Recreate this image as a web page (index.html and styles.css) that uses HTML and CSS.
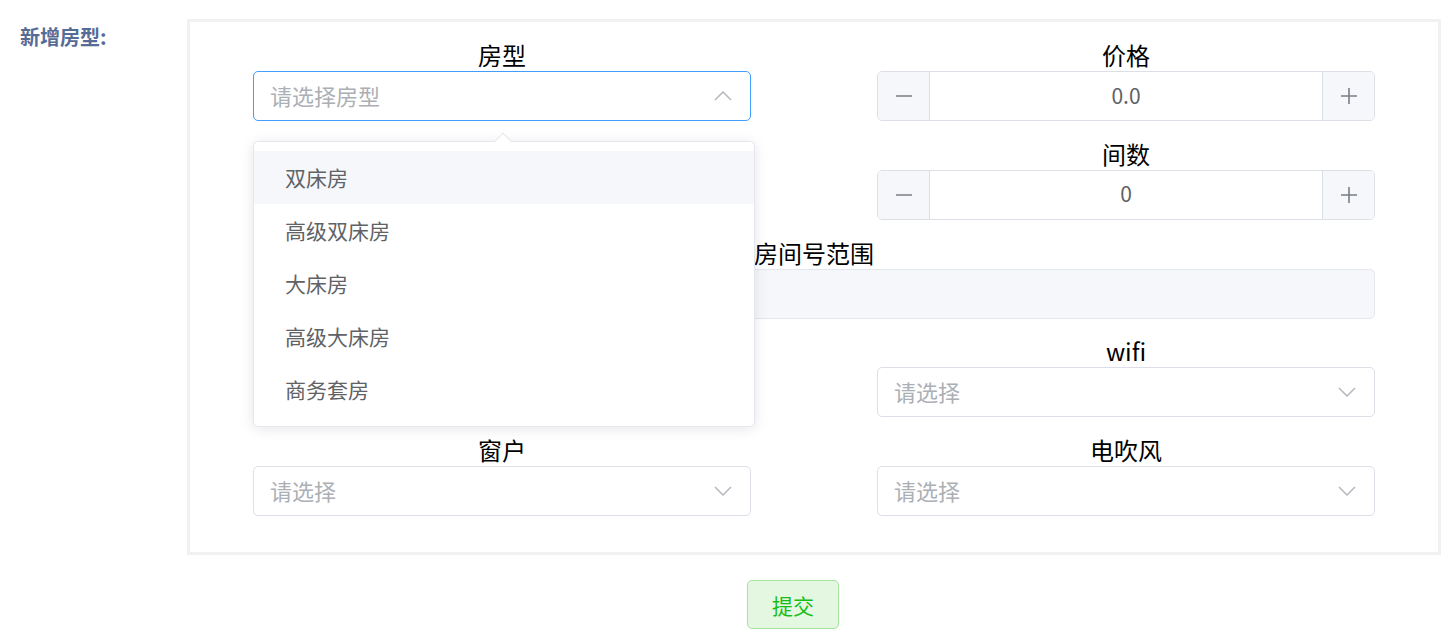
FILE: index.html
```html
<!DOCTYPE html>
<html lang="zh-CN">
<head>
<meta charset="utf-8">
<title>新增房型</title>
<link rel="stylesheet" href="styles.css">
</head>
<body>
<div class="page">
  <div class="form-row">
    <div class="row-label">新增房型:</div>
    <div class="panel">
      <div class="grid">
        <div class="field">
          <div class="field-label">房型</div>
          <div class="select is-focus">
            <span class="placeholder">请选择房型</span>
            <svg class="chev" width="18" height="10" viewBox="0 0 18 10"><path d="M1 9 L9 1 L17 9" fill="none" stroke="#b4b7bd" stroke-width="1.5"/></svg>
            <div class="dropdown">
              <span class="dropdown-arrow"></span>
              <ul class="options">
                <li class="option is-hover">双床房</li>
                <li class="option">高级双床房</li>
                <li class="option">大床房</li>
                <li class="option">高级大床房</li>
                <li class="option">商务套房</li>
              </ul>
            </div>
          </div>
        </div>
        <div class="field">
          <div class="field-label">价格</div>
          <div class="number">
            <span class="num-btn num-minus"><svg width="18" height="18" viewBox="0 0 18 18"><path d="M1 9 H17" stroke="#7a7d82" stroke-width="1.6"/></svg></span>
            <span class="num-value">0.0</span>
            <span class="num-btn num-plus"><svg width="18" height="18" viewBox="0 0 18 18"><path d="M1 9 H17 M9 1 V17" stroke="#7a7d82" stroke-width="1.6"/></svg></span>
          </div>
        </div>
        <div class="field"></div>
        <div class="field">
          <div class="field-label">间数</div>
          <div class="number">
            <span class="num-btn num-minus"><svg width="18" height="18" viewBox="0 0 18 18"><path d="M1 9 H17" stroke="#7a7d82" stroke-width="1.6"/></svg></span>
            <span class="num-value">0</span>
            <span class="num-btn num-plus"><svg width="18" height="18" viewBox="0 0 18 18"><path d="M1 9 H17 M9 1 V17" stroke="#7a7d82" stroke-width="1.6"/></svg></span>
          </div>
        </div>
        <div class="field field-wide">
          <div class="field-label">房间号范围</div>
          <div class="input is-disabled"></div>
        </div>
        <div class="field"></div>
        <div class="field">
          <div class="field-label">wifi</div>
          <div class="select">
            <span class="placeholder">请选择</span>
            <svg class="chev" width="18" height="10" viewBox="0 0 18 10"><path d="M1 1 L9 9 L17 1" fill="none" stroke="#b4b7bd" stroke-width="1.5"/></svg>
          </div>
        </div>
        <div class="field">
          <div class="field-label">窗户</div>
          <div class="select">
            <span class="placeholder">请选择</span>
            <svg class="chev" width="18" height="10" viewBox="0 0 18 10"><path d="M1 1 L9 9 L17 1" fill="none" stroke="#b4b7bd" stroke-width="1.5"/></svg>
          </div>
        </div>
        <div class="field">
          <div class="field-label">电吹风</div>
          <div class="select">
            <span class="placeholder">请选择</span>
            <svg class="chev" width="18" height="10" viewBox="0 0 18 10"><path d="M1 1 L9 9 L17 1" fill="none" stroke="#b4b7bd" stroke-width="1.5"/></svg>
          </div>
        </div>
      </div>
    </div>
  </div>
  <div class="actions">
    <button class="btn-submit" type="button">提交</button>
  </div>
</div>
</body>
</html>
```
FILE: styles.css
```css
* { box-sizing: border-box; }
html, body {
  margin: 0;
  padding: 0;
  background: #ffffff;
  font-family: "Noto Sans CJK SC", "Noto Sans", "Liberation Sans", sans-serif;
}
.page {
  padding: 19px 15px 0 20px;
}
.form-row {
  display: flex;
  align-items: flex-start;
}
.row-label {
  width: 167px;
  flex: none;
  padding-top: 6px;
  font-size: 20px;
  line-height: 24px;
  font-weight: 700;
  color: #566b96;
}
.panel {
  flex: 1;
  border: 3px solid #f3f0f2;
  padding: 21px 63px 36px;
}
.grid {
  display: grid;
  grid-template-columns: 1fr 1fr;
  column-gap: 126px;
  row-gap: 20.75px;
}
.field-wide { grid-column: 1 / -1; }
.field-label {
  text-align: center;
  font-size: 24px;
  line-height: 24px;
  height: 28px;
  color: #000;
}
.select, .input, .number {
  position: relative;
  height: 50px;
  border: 1px solid #dcdfe6;
  border-radius: 5px;
  background: #fff;
}
.select {
  display: flex;
  align-items: center;
  padding: 0 18px 0 16px;
}
.select.is-focus { border-color: #409eff; }
.placeholder {
  flex: 1;
  font-size: 22px;
  line-height: 1;
  padding-bottom: 2px;
  color: #acafb5;
}
.chev { flex: none; }
.input.is-disabled {
  background: #f5f7fa;
  border-color: #e4e7ed;
}
.number {
  display: flex;
  overflow: hidden;
}
.num-btn {
  width: 52px;
  flex: none;
  display: flex;
  align-items: center;
  justify-content: center;
  background: #f5f7fa;
}
.num-minus { border-right: 1px solid #dcdfe6; }
.num-plus { border-left: 1px solid #dcdfe6; }
.num-value {
  flex: 1;
  display: flex;
  align-items: center;
  justify-content: center;
  font-size: 21px;
  padding-bottom: 3px;
  color: #606266;
}
.dropdown {
  position: absolute;
  top: 69px;
  left: -1px;
  width: 502px;
  z-index: 10;
  background: #fff;
  border: 1px solid #e4e7ed;
  border-radius: 5px;
  box-shadow: 0 2px 14px 0 rgba(0, 0, 0, 0.1);
}
.dropdown-arrow {
  position: absolute;
  top: -7px;
  left: 243px;
  width: 12px;
  height: 12px;
  background: #fff;
  border-top: 1px solid #e4e7ed;
  border-left: 1px solid #e4e7ed;
  transform: rotate(45deg);
}
.options {
  list-style: none;
  margin: 0;
  padding: 9px 0 10px;
}
.option {
  height: 53px;
  line-height: 53px;
  padding-left: 31px;
  font-size: 21px;
  color: #606266;
}
.option.is-hover { background: #f5f7fa; }
.actions {
  padding: 25px 0 0 727px;
}
.btn-submit {
  width: 92px;
  height: 49px;
  border: 1px solid #a6e3a0;
  border-radius: 5px;
  background: #e3f7e1;
  color: #17bd17;
  font-family: inherit;
  font-size: 21px;
  padding: 0;
}
```
